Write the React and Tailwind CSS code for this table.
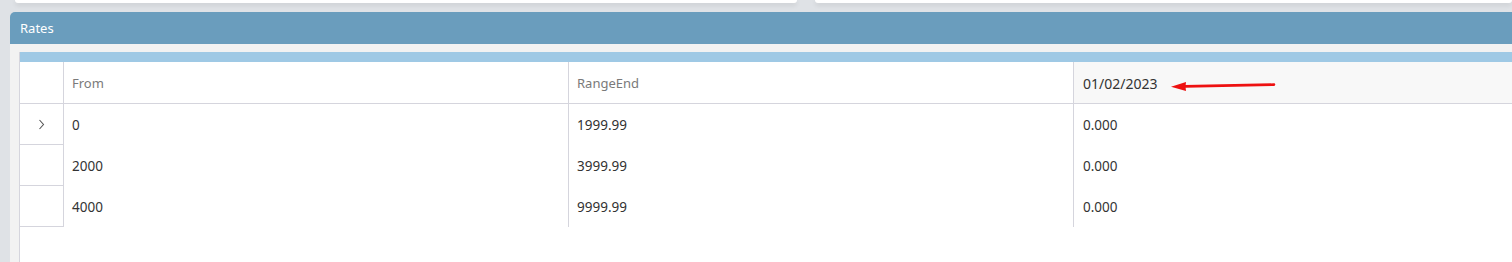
const rows = [
  { from: '0', rangeEnd: '1999.99', rate: '0.000', current: true },
  { from: '2000', rangeEnd: '3999.99', rate: '0.000' },
  { from: '4000', rangeEnd: '9999.99', rate: '0.000' },
];

function RowChevron() {
  return (
    <svg width="7" height="11" viewBox="0 0 7 11" fill="none">
      <path d="M1.5 1 L5.5 5.5 L1.5 10" stroke="#555" strokeWidth="1.1" />
    </svg>
  );
}

function ArrowNote() {
  return (
    <svg className="absolute left-[1169px] top-[79px]" width="108" height="14" viewBox="0 0 108 14">
      <path d="M105 5.6 L16 7.4" stroke="#ee1111" strokeWidth="2.6" strokeLinecap="round" />
      <path d="M2 7.8 L17 3 L16.5 7.4 L17 12 Z" fill="#ee1111" />
    </svg>
  );
}

export default function App() {
  return (
    <div className="relative w-[1512px] h-[262px] overflow-hidden bg-[#dfe2e6] flex flex-col font-['Noto_Sans',sans-serif] text-[13px]">
      {/* bottom edges of the cards above */}
      <div className="h-[12px] flex gap-[18px] pl-[15px]">
        <div className="w-[782px] h-[3px] bg-white rounded-b-[3px] shadow-[0_2px_5px_rgba(0,0,0,0.12)]" />
        <div className="flex-1 h-[3px] bg-white rounded-b-[3px] shadow-[0_2px_5px_rgba(0,0,0,0.12)]" />
      </div>

      <div className="ml-[10px] flex-1 flex flex-col rounded-tl-[5px] overflow-hidden">
        <div className="h-[32px] shrink-0 bg-[#6a9dbd] text-white px-[10px] pt-[2px] flex items-center">Rates</div>

        <div className="flex-1 bg-[#f2f2f2] pl-[9px] pt-[8px]">
          <div className="h-full bg-white border-l border-[#d5d5dd]">
            <div className="h-[10px] bg-[#9fc9e5]" />
            <div className="grid grid-cols-[44px_505px_505px_1fr]">
              <div className="h-[42px] border-r border-b border-[#d5d5dd]" />
              <div className="h-[42px] border-r border-b border-[#d5d5dd] pl-[8px] pt-[2px] flex items-center text-[#7a7a7a]">From</div>
              <div className="h-[42px] border-r border-b border-[#d5d5dd] pl-[8px] pt-[2px] flex items-center text-[#7a7a7a]">RangeEnd</div>
              <div className="h-[42px] border-b border-[#d5d5dd] bg-[#f8f8f8] pl-[9px] pt-[2px] flex items-center text-[14px] text-[#333]">01/02/2023</div>

              {rows.map((r) => (
                <div key={r.from} className="contents">
                  <div className="h-[41px] border-r border-b border-[#d5d5dd] flex items-center justify-center">
                    {r.current && <RowChevron />}
                  </div>
                  <div className="h-[41px] border-r border-[#d5d5dd] pl-[8px] pt-[1px] flex items-center text-[13.5px] text-[#333]">{r.from}</div>
                  <div className="h-[41px] border-r border-[#d5d5dd] pl-[8px] pt-[1px] flex items-center text-[13.5px] text-[#333]">{r.rangeEnd}</div>
                  <div className="h-[41px] pl-[9px] pt-[1px] flex items-center text-[13.5px] text-[#333]">{r.rate}</div>
                </div>
              ))}
            </div>
          </div>
        </div>
      </div>

      <ArrowNote />
    </div>
  );
}
